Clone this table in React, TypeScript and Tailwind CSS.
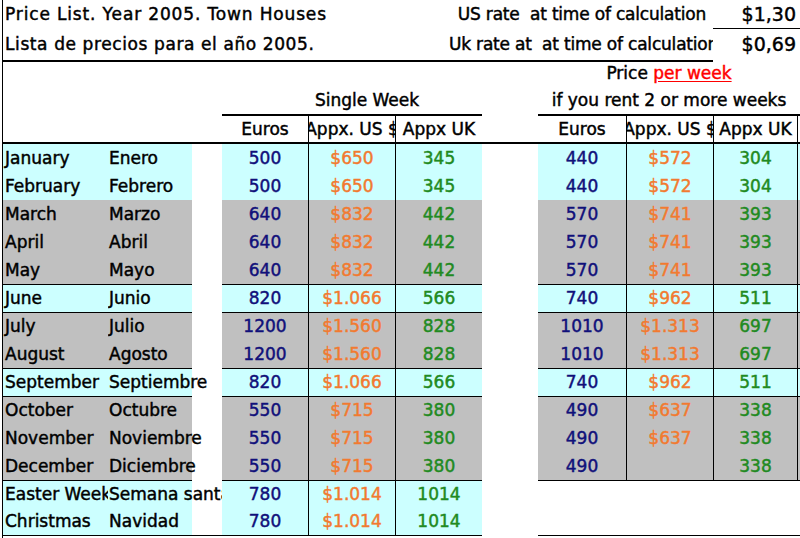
import React from "react";

type Row = {
  en: string;
  es: string;
  band: "c" | "g";
  top?: boolean;
  bottom?: boolean;
  e: string;
  u: string;
  k: string;
  e2?: string;
  u2?: string;
  k2?: string;
  rightTop?: boolean;
  rightBlank?: boolean;
};

const rows: Row[] = [
  { en: "January", es: "Enero", band: "c", e: "500", u: "$650", k: "345", e2: "440", u2: "$572", k2: "304" },
  { en: "February", es: "Febrero", band: "c", e: "500", u: "$650", k: "345", e2: "440", u2: "$572", k2: "304" },
  { en: "March", es: "Marzo", band: "g", e: "640", u: "$832", k: "442", e2: "570", u2: "$741", k2: "393" },
  { en: "April", es: "Abril", band: "g", e: "640", u: "$832", k: "442", e2: "570", u2: "$741", k2: "393" },
  { en: "May", es: "Mayo", band: "g", e: "640", u: "$832", k: "442", e2: "570", u2: "$741", k2: "393" },
  { en: "June", es: "Junio", band: "c", top: true, e: "820", u: "$1.066", k: "566", e2: "740", u2: "$962", k2: "511" },
  { en: "July", es: "Julio", band: "g", top: true, e: "1200", u: "$1.560", k: "828", e2: "1010", u2: "$1.313", k2: "697" },
  { en: "August", es: "Agosto", band: "g", e: "1200", u: "$1.560", k: "828", e2: "1010", u2: "$1.313", k2: "697" },
  { en: "September", es: "Septiembre", band: "c", top: true, e: "820", u: "$1.066", k: "566", e2: "740", u2: "$962", k2: "511" },
  { en: "October", es: "Octubre", band: "g", top: true, e: "550", u: "$715", k: "380", e2: "490", u2: "$637", k2: "338" },
  { en: "November", es: "Noviembre", band: "g", e: "550", u: "$715", k: "380", e2: "490", u2: "$637", k2: "338" },
  { en: "December", es: "Diciembre", band: "g", e: "550", u: "$715", k: "380", e2: "490", u2: "", k2: "338" },
  { en: "Easter Week", es: "Semana santa", band: "c", top: true, rightTop: true, rightBlank: true, e: "780", u: "$1.014", k: "1014" },
  { en: "Christmas", es: "Navidad", band: "c", bottom: true, rightBlank: true, e: "780", u: "$1.014", k: "1014" },
];

function DataRow({ r }: { r: Row }) {
  const bg = r.band === "c" ? "bg-[#ccffff]" : "bg-[#c0c0c0]";
  const t = r.top ? "border-t border-t-black" : "";
  const b = r.bottom ? "border-b border-b-black" : "";
  const rbg = r.rightBlank ? "bg-white" : bg;
  const rt = r.rightTop ? "border-t border-t-black" : r.rightBlank ? "" : t;
  const rb = r.bottom ? "border-b border-b-black" : "";
  const rv = r.rightBlank ? "" : "border-l border-l-black";
  const rr = r.rightBlank ? "" : "border-r border-r-black";
  return (
    <div className="flex h-[28px]">
      <div className={`w-[105px] shrink-0 overflow-hidden whitespace-nowrap pl-[2px] flex items-center ${bg} ${t} ${b}`}>
        {r.en}
      </div>
      <div className="w-[114px] shrink-0 flex overflow-hidden">
        <div className={`w-[84px] shrink-0 whitespace-nowrap pl-[1px] flex items-center ${bg} ${t} ${b}`}>{r.es}</div>
        <div className={`w-[30px] shrink-0 ${b}`}></div>
      </div>
      <div className={`w-[86px] shrink-0 flex items-center justify-center text-[#10107a] ${bg} ${t} ${b}`}>{r.e}</div>
      <div className={`w-[87px] shrink-0 flex items-center justify-center text-[#f27a30] border-l border-l-black ${bg} ${t} ${b}`}>{r.u}</div>
      <div className={`w-[87px] shrink-0 flex items-center justify-center text-[#218a21] border-l border-l-black ${bg} ${t} ${b}`}>{r.k}</div>
      <div className="w-[56px] shrink-0 bg-white"></div>
      <div className={`w-[88px] shrink-0 flex items-center justify-center text-[#10107a] ${rbg} ${rt} ${rb}`}>{r.e2}</div>
      <div className={`w-[87px] shrink-0 flex items-center justify-center text-[#f27a30] ${rv} ${rbg} ${rt} ${rb}`}>{r.u2}</div>
      <div className={`w-[85px] shrink-0 flex items-center justify-center text-[#218a21] ${rv} ${rr} ${rbg} ${rt} ${rb}`}>{r.k2}</div>
      <div className={`w-[2px] shrink-0 ${rbg} ${rt} ${rb}`}></div>
    </div>
  );
}

export default function App() {
  return (
    <div className="w-[800px] h-[538px] overflow-hidden bg-white text-black font-['DejaVu_Sans',sans-serif] text-[17px] leading-none [-webkit-text-stroke:0.45px_currentColor]">
      <div className="ml-[2px] border-l border-l-black h-[538px]">
        {/* Row 1 */}
        <div className="flex h-[29px]">
          <div className="w-[710px] shrink-0 flex items-center justify-between">
            <span className="pl-[2px] tracking-[0.85px]">Price List. Year 2005. Town Houses</span>
            <span className="pr-[7px] whitespace-pre tracking-[-0.2px]">US rate  at time of calculation</span>
          </div>
          <div className="w-[87px] shrink-0 flex items-center justify-end pr-[4px] text-[19px] border-b border-b-black">
            $1,30
          </div>
        </div>
        {/* Row 2 */}
        <div className="flex h-[33px]">
          <div className="w-[710px] shrink-0 flex items-center border-b-2 border-b-black">
            <span className="pl-[2px] tracking-[0.6px] whitespace-nowrap">Lista de precios para el año 2005.</span>
            <div className="ml-auto w-[264px] overflow-hidden whitespace-pre tracking-[-0.2px]">Uk rate at  at time of calculation</div>
          </div>
          <div className="w-[87px] shrink-0 flex items-center justify-end pr-[4px] pb-[2px] text-[19px]">$0,69</div>
        </div>
        {/* Row 3 */}
        <div className="flex h-[24px]">
          <div className="w-[535px] shrink-0"></div>
          <div className="w-[262px] shrink-0 flex items-center justify-center pb-[2px] whitespace-pre">
            <span>Price </span>
            <span className="text-[#ff0000] underline underline-offset-2">per week</span>
          </div>
        </div>
        {/* Row 4 */}
        <div className="flex h-[30px]">
          <div className="w-[219px] shrink-0"></div>
          <div className="w-[260px] shrink-0 flex items-center justify-center pl-[30px] border-b-2 border-b-black whitespace-nowrap">
            Single Week
          </div>
          <div className="w-[56px] shrink-0"></div>
          <div className="w-[262px] shrink-0 flex items-center justify-center border-b-2 border-b-black whitespace-nowrap">
            if you rent 2 or more weeks
          </div>
        </div>
        {/* Row 5 */}
        <div className="flex h-[28px] border-b-2 border-b-black">
          <div className="w-[219px] shrink-0"></div>
          <div className="w-[86px] shrink-0 flex items-center justify-center">Euros</div>
          <div className="w-[87px] shrink-0 flex items-center justify-center overflow-hidden whitespace-nowrap border-l border-l-black">
            Appx. US $
          </div>
          <div className="w-[87px] shrink-0 flex items-center justify-center overflow-hidden whitespace-nowrap border-l border-l-black">
            Appx UK
          </div>
          <div className="w-[56px] shrink-0"></div>
          <div className="w-[88px] shrink-0 flex items-center justify-center">Euros</div>
          <div className="w-[87px] shrink-0 flex items-center justify-center overflow-hidden whitespace-nowrap border-l border-l-black">
            Appx. US $
          </div>
          <div className="w-[85px] shrink-0 flex items-center justify-center overflow-hidden whitespace-nowrap border-l border-l-black border-r border-r-black">
            Appx UK
          </div>
        </div>
        {rows.map((r) => (
          <DataRow key={r.en} r={r} />
        ))}
      </div>
    </div>
  );
}
